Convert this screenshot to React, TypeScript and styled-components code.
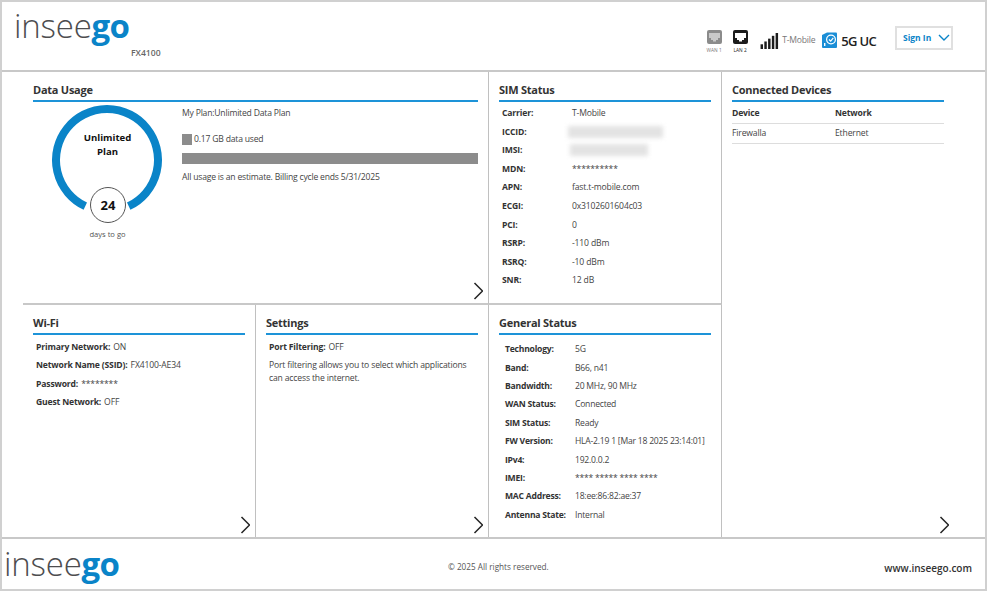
import React from 'react';
import styled, { createGlobalStyle } from 'styled-components';

const Global = createGlobalStyle`
  html, body { margin: 0; padding: 0; background: #fff; }
  body { font-family: "Open Sans", "Noto Sans", sans-serif; color: #444; }
  * { box-sizing: border-box; }
`;

const Page = styled.div`
  width: 987px;
  height: 591px;
  border: 2px solid #d0d0d0;
  display: flex;
  flex-direction: column;
`;

const Header = styled.header`
  height: 70px;
  flex: none;
  border-bottom: 2px solid #c8c8c8;
  display: flex;
  justify-content: space-between;
  padding: 0 32px 0 12px;
`;

const LogoBlock = styled.div`
  display: flex;
  flex-direction: column;
  padding-top: 4px;
`;

const Logo = styled.div<{ $size: number }>`
  font-size: ${(p) => p.$size}px;
  line-height: 1.2;
  font-weight: 300;
  color: #4d4d4f;
  letter-spacing: -0.2px;
  b { font-weight: 700; letter-spacing: -0.8px; color: #0a84c8; }
`;

const FooterLogo = styled(Logo)`
  margin-bottom: 6px;
`;

const Model = styled.div`
  font-size: 8.6px;
  font-weight: 600;
  color: #666;
  margin: 1px 0 0 117px;
`;

const Status = styled.div`
  display: flex;
  align-items: flex-start;
  padding-top: 24px;
`;

const Port = styled.div<{ $dark?: boolean; $gap: number }>`
  width: 20px;
  margin-right: ${(p) => p.$gap}px;
  padding-top: 4px;
  display: flex;
  flex-direction: column;
  align-items: center;
  font-size: 4.8px;
  line-height: 12px;
  color: ${(p) => (p.$dark ? '#222' : '#777')};
`;

const Carrier = styled.span`
  font-size: 8.6px;
  letter-spacing: -0.2px;
  color: #777;
  margin: 8px 7px 0 3px;
`;

const NetworkType = styled.span`
  font-size: 13px;
  font-weight: 600;
  letter-spacing: -0.7px;
  color: #222;
  margin: 6px 19px 0 4px;
`;

const SignIn = styled.button`
  width: 58px;
  height: 24px;
  border: 2px solid #e0e0e0;
  background: #fff;
  color: #0a84c8;
  font: 700 8.5px "Open Sans", sans-serif;
  display: flex;
  align-items: center;
  justify-content: space-between;
  padding: 0 1px 2px 6px;
  svg { flex: none; }
`;

const Main = styled.main`
  height: 467px;
  flex: none;
  display: grid;
  grid-template-columns: 233px 233px 233px 1fr;
  grid-template-rows: 233px 1fr;
  padding-left: 21px;
  border-bottom: 2px solid #c8c8c8;
`;

const Panel = styled.section<{ $wide?: boolean; $tall?: boolean; $top?: boolean; $last?: boolean }>`
  grid-column: ${(p) => (p.$wide ? 'span 2' : 'auto')};
  grid-row: ${(p) => (p.$tall ? 'span 2' : 'auto')};
  padding: 10px ${(p) => (p.$last ? 41 : 10)}px 3px 10px;
  display: flex;
  flex-direction: column;
  min-height: 0;
  border-right: ${(p) => (p.$last ? 'none' : '1px solid #c0c0c0')};
  border-bottom: ${(p) => (p.$top ? '2px solid #c8c8c8' : 'none')};
`;

const Title = styled.h2`
  margin: 0;
  font-size: 11px;
  line-height: 15px;
  letter-spacing: -0.25px;
  font-weight: 700;
  color: #333;
  padding-bottom: 3px;
  border-bottom: 2px solid #1d93d8;
`;

const Usage = styled.div`
  display: flex;
  margin-top: 2px;
`;

const Gauge = styled.div`
  position: relative;
  width: 149px;
  height: 138px;
  flex: none;
`;

const GaugeLabel = styled.div`
  position: absolute;
  left: 19px;
  top: 27px;
  width: 111px;
  text-align: center;
  font-size: 9.6px;
  line-height: 13.5px;
  font-weight: 700;
  color: #111;
`;

const DaysNumber = styled.div`
  position: absolute;
  left: 57px;
  top: 91px;
  width: 36px;
  text-align: center;
  font-size: 13px;
  line-height: 20px;
  font-weight: 700;
  color: #111;
`;

const DaysLabel = styled.div`
  position: absolute;
  left: 19px;
  top: 125px;
  width: 111px;
  text-align: center;
  font-size: 7.6px;
  line-height: 10px;
  color: #555;
`;

const Plan = styled.div`
  flex: 1;
  font-size: 8.6px;
  letter-spacing: -0.2px;
  color: #444;
  padding-top: 3px;
`;

const PlanLine = styled.div<{ $mt?: number }>`
  line-height: 12px;
  margin-top: ${(p) => p.$mt || 0}px;
  display: flex;
  align-items: center;
`;

const Swatch = styled.span`
  width: 10px;
  height: 11px;
  background: #8c8c8c;
  margin-right: 2px;
`;

const Bar = styled.div`
  height: 11px;
  background: #8c8c8c;
  margin-top: 8px;
`;

const Rows = styled.div<{ $mt: number; $pitch: number; $indent: number; $tight?: boolean }>`
  margin: ${(p) => p.$mt}px 0 0 ${(p) => p.$indent}px;
  display: grid;
  grid-auto-rows: ${(p) => p.$pitch}px;
  font-size: 8.6px;
  letter-spacing: ${(p) => (p.$tight ? -0.23 : -0.16)}px;
`;

const Row = styled.div`
  display: flex;
  align-items: center;
  white-space: nowrap;
`;

const Label = styled.span<{ $width?: number }>`
  font-weight: 700;
  color: #333;
  width: ${(p) => (p.$width ? `${p.$width}px` : 'auto')};
  margin-right: ${(p) => (p.$width ? 0 : 3)}px;
  flex: none;
`;

const Value = styled.span`
  color: #444;
`;

const Redacted = styled.span<{ $width: number; $shift: number }>`
  width: ${(p) => p.$width}px;
  height: 12px;
  margin-left: ${(p) => p.$shift}px;
  background: #e3e3e3;
  filter: blur(2px);
`;

const Paragraph = styled.p`
  margin: 3px 0 0 3px;
  font-size: 8.6px;
  letter-spacing: -0.16px;
  line-height: 13px;
  color: #444;
`;

const More = styled.div`
  margin-top: auto;
  display: flex;
  justify-content: flex-end;
  svg { display: block; margin-right: -5px; }
`;

const DeviceTable = styled.table`
  width: 212px;
  border-collapse: collapse;
  font-size: 8.6px;
  letter-spacing: -0.16px;
  th, td { text-align: left; padding: 0; height: 20px; font-weight: 400; color: #444; border-bottom: 1px solid #ddd; }
  th { font-weight: 700; color: #333; height: 21px; padding-top: 1px; }
  th:first-child { width: 103px; }
`;

const Footer = styled.footer`
  flex: 1;
  display: grid;
  grid-template-columns: 444px auto 1fr;
  align-items: center;
  padding: 5px 13px 0 2px;
`;

const Copyright = styled.div`
  font-size: 8.2px;
  color: #555;
`;

const Site = styled.div`
  font-size: 10px;
  font-weight: 600;
  color: #333;
  text-align: right;
  padding-top: 2px;
`;

const Chevron = () => (
  <svg width="12" height="18" viewBox="0 0 12 18" fill="none">
    <path d="M3.5 1 11.5 9 3.5 17" stroke="#222" strokeWidth="1.5" />
  </svg>
);

const PortIcon = ({ dark }: { dark?: boolean }) => (
  <svg width="15" height="14" viewBox="0 0 15 14">
    <rect width="15" height="14" rx="2" fill={dark ? '#1c1c1c' : '#8b8b8b'} />
    <path d="M2 3h11v5h-2v2H9v1.5H6V10H4V8H2z" fill={dark ? '#fff' : '#c9c9c9'} />
  </svg>
);

const SignalBars = () => (
  <svg width="19" height="16" viewBox="0 0 19 17" style={{ marginTop: 7 }}>
    {[0, 1, 2, 3, 4].map((i) => (
      <rect key={i} x={i * 4} y={12 - i * 3} width="2.6" height={5 + i * 3} fill="#1c1c1c" />
    ))}
  </svg>
);

const FiveGIcon = () => (
  <svg width="15" height="16" viewBox="0 0 15 16" style={{ marginTop: 6 }}>
    <path d="M0 3 5 0.5h9a1 1 0 0 1 1 1V15a1 1 0 0 1-1 1H1a1 1 0 0 1-1-1z" fill="#1b8ed6" />
    <circle cx="9" cy="7.5" r="4.4" fill="none" stroke="#fff" strokeWidth="1.2" />
    <path d="M7 7.5 8.7 9.2 11.3 5.8" fill="none" stroke="#fff" strokeWidth="1.2" />
    <rect x="2" y="11" width="1.4" height="3" fill="#fff" />
  </svg>
);

const Ring = () => (
  <svg width="149" height="132" viewBox="0 0 149 132" style={{ display: 'block' }}>
    <path d="M52.3 102.2A51 51 0 1 1 95.7 102.2" fill="none" stroke="#0a84c8" strokeWidth="8" />
    <circle cx="75" cy="101" r="17.5" fill="#fff" stroke="#555" strokeWidth="1" />
  </svg>
);

const sim: [string, string][] = [
  ['Carrier:', 'T-Mobile'],
  ['ICCID:', ''],
  ['IMSI:', ''],
  ['MDN:', '**********'],
  ['APN:', 'fast.t-mobile.com'],
  ['ECGI:', '0x3102601604c03'],
  ['PCI:', '0'],
  ['RSRP:', '-110 dBm'],
  ['RSRQ:', '-10 dBm'],
  ['SNR:', '12 dB'],
];

const general: [string, string][] = [
  ['Technology:', '5G'],
  ['Band:', 'B66, n41'],
  ['Bandwidth:', '20 MHz, 90 MHz'],
  ['WAN Status:', 'Connected'],
  ['SIM Status:', 'Ready'],
  ['FW Version:', 'HLA-2.19 1 [Mar 18 2025 23:14:01]'],
  ['IPv4:', '192.0.0.2'],
  ['IMEI:', '**** ***** **** ****'],
  ['MAC Address:', '18:ee:86:82:ae:37'],
  ['Antenna State:', 'Internal'],
];

const wifi: [string, string][] = [
  ['Primary Network:', 'ON'],
  ['Network Name (SSID):', 'FX4100-AE34'],
  ['Password:', '********'],
  ['Guest Network:', 'OFF'],
];

export default function App() {
  return (
    <Page>
      <Global />
      <Header>
        <LogoBlock>
          <Logo $size={33}>insee<b>go</b></Logo>
          <Model>FX4100</Model>
        </LogoBlock>
        <Status>
          <Port $gap={6}><PortIcon />WAN 1</Port>
          <Port $dark $gap={10}><PortIcon dark />LAN 2</Port>
          <SignalBars />
          <Carrier>T-Mobile</Carrier>
          <FiveGIcon />
          <NetworkType>5G UC</NetworkType>
          <SignIn>
            Sign In
            <svg width="12" height="7" viewBox="0 0 12 7" fill="none">
              <path d="M1 1l5 5 5-5" stroke="#0a84c8" strokeWidth="1.4" />
            </svg>
          </SignIn>
        </Status>
      </Header>
      <Main>
        <Panel $wide $top>
          <Title>Data Usage</Title>
          <Usage>
            <Gauge>
              <Ring />
              <GaugeLabel>Unlimited<br />Plan</GaugeLabel>
              <DaysNumber>24</DaysNumber>
              <DaysLabel>days to go</DaysLabel>
            </Gauge>
            <Plan>
              <PlanLine>My Plan:Unlimited Data Plan</PlanLine>
              <PlanLine $mt={14}><Swatch />0.17 GB data used</PlanLine>
              <Bar />
              <PlanLine $mt={7}>All usage is an estimate. Billing cycle ends 5/31/2025</PlanLine>
            </Plan>
          </Usage>
          <More><Chevron /></More>
        </Panel>
        <Panel $top>
          <Title>SIM Status</Title>
          <Rows $mt={2} $pitch={18.55} $indent={3}>
            {sim.map(([k, v]) => (
              <Row key={k}>
                <Label $width={70}>{k}</Label>
                {k === 'ICCID:' && <Redacted $width={95} $shift={-4} />}
                {k === 'IMSI:' && <Redacted $width={78} $shift={-2} />}
                {v && <Value>{v}</Value>}
              </Row>
            ))}
          </Rows>
        </Panel>
        <Panel $tall $last>
          <Title>Connected Devices</Title>
          <DeviceTable>
            <thead>
              <tr><th>Device</th><th>Network</th></tr>
            </thead>
            <tbody>
              <tr><td>Firewalla</td><td>Ethernet</td></tr>
            </tbody>
          </DeviceTable>
          <More><Chevron /></More>
        </Panel>
        <Panel>
          <Title>Wi-Fi</Title>
          <Rows $mt={3} $pitch={18.3} $indent={3}>
            {wifi.map(([k, v]) => (
              <Row key={k}><Label>{k}</Label><Value>{v}</Value></Row>
            ))}
          </Rows>
          <More><Chevron /></More>
        </Panel>
        <Panel>
          <Title>Settings</Title>
          <Rows $mt={3} $pitch={18.3} $indent={3}>
            <Row><Label>Port Filtering:</Label><Value>OFF</Value></Row>
          </Rows>
          <Paragraph>Port filtering allows you to select which applications can access the internet.</Paragraph>
          <More><Chevron /></More>
        </Panel>
        <Panel>
          <Title>General Status</Title>
          <Rows $mt={5} $pitch={18.4} $indent={6} $tight>
            {general.map(([k, v]) => (
              <Row key={k}><Label $width={70}>{k}</Label><Value>{v}</Value></Row>
            ))}
          </Rows>
        </Panel>
      </Main>
      <Footer>
        <FooterLogo $size={33}>insee<b>go</b></FooterLogo>
        <Copyright>© 2025 All rights reserved.</Copyright>
        <Site>www.inseego.com</Site>
      </Footer>
    </Page>
  );
}
